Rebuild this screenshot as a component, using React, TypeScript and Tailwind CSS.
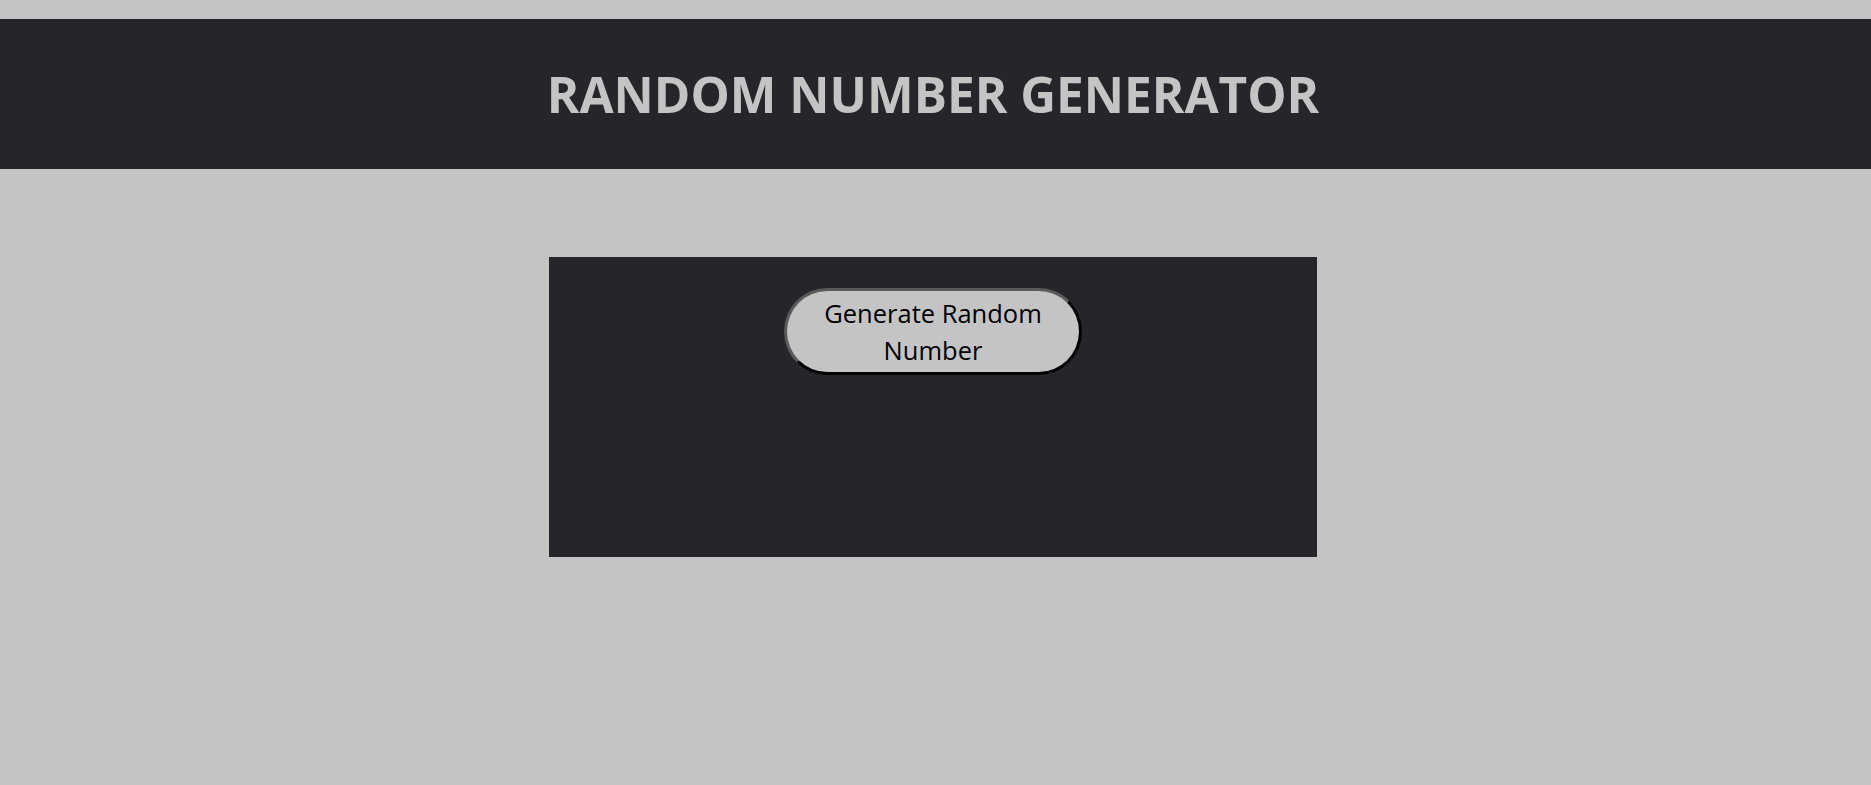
export default function App() {
  return (
    <div
      className="min-h-[785px] bg-[#c4c4c4] pt-[19px]"
      style={{ fontFamily: '"Comic Sans MS", "Open Sans", sans-serif' }}
    >
      <header className="h-[150px] bg-[#26252a] flex items-center justify-center pr-[5px]">
        <h1 className="text-[49.5px] font-bold text-[#c4c4c4] leading-none pt-[2px]">
          RANDOM NUMBER GENERATOR
        </h1>
      </header>

      <main className="flex justify-center pt-[88px] pr-[5px]">
        <div className="w-[768px] h-[300px] bg-[#26252a] flex justify-center pt-[31px]">
          <button className="w-[298px] h-[87px] rounded-full bg-[#c4c4c4] text-black text-[25.5px] leading-[37px] border-[3px] border-t-[#5a5a5a] border-l-[#5a5a5a] border-b-black border-r-black px-9">
            Generate Random Number
          </button>
        </div>
      </main>
    </div>
  );
}
